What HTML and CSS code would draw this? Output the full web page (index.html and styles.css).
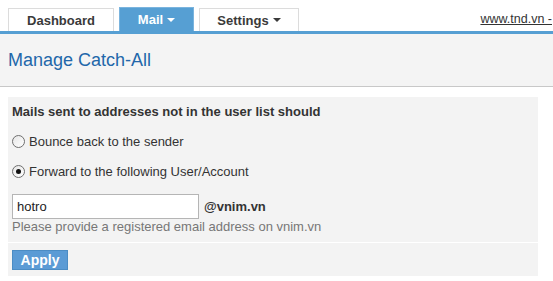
FILE: index.html
```html
<!DOCTYPE html>
<html lang="en">
<head>
    <meta charset="UTF-8">
    <title>Manage Catch-All</title>
    <link rel="stylesheet" href="styles.css">
</head>
<body>
    <header class="topbar">
        <nav class="tabs">
            <a class="tab tab-dashboard" href="#">Dashboard</a>
            <a class="tab tab-mail active" href="#">Mail <span class="caret"></span></a>
            <a class="tab tab-settings" href="#">Settings <span class="caret"></span></a>
        </nav>
        <a class="site-link" href="#">www.tnd.vn -</a>
    </header>

    <div class="page-head">
        <h1>Manage Catch-All</h1>
    </div>

    <main class="content">
        <form class="panel">
            <div class="panel-body">
                <p class="question">Mails sent to addresses not in the user list should</p>

                <label class="radio-row">
                    <input type="radio" name="catchall" value="bounce">
                    <span>Bounce back to the sender</span>
                </label>
                <label class="radio-row">
                    <input type="radio" name="catchall" value="forward" checked>
                    <span>Forward to the following User/Account</span>
                </label>

                <div class="address-row">
                    <input class="address-input" type="text" value="hotro">
                    <span class="domain">@vnim.vn</span>
                </div>
                <p class="hint">Please provide a registered email address on vnim.vn</p>
            </div>
            <div class="panel-foot">
                <button class="btn-apply" type="button">Apply</button>
            </div>
        </form>
    </main>
</body>
</html>
```

FILE: styles.css
```css
/* colours */
:root {
    --font-main: 'Liberation Sans', Arial, sans-serif;
    --color-blue: #569fd3;
    --color-title: #2267aa;
    --color-text: #333333;
    --color-muted: #777777;
    --color-panel: #f3f3f3;
}

body {
    margin: 0;
    font-family: var(--font-main);
    font-size: 13px;
    color: var(--color-text);
    background: #fff;
    overflow: hidden;
}

/* top tabs */
.topbar {
    display: flex;
    align-items: flex-end;
    height: 31px;
    border-bottom: 3px solid var(--color-blue);
    white-space: nowrap;
}

.tabs {
    display: flex;
    align-items: flex-end;
    gap: 5px;
    padding-left: 8px;
}

.tab {
    display: flex;
    align-items: center;
    justify-content: center;
    box-sizing: border-box;
    height: 23px;
    border: 1px solid #dcdcdc;
    border-bottom: none;
    background: #fff;
    color: #3a3a3a;
    font-weight: bold;
    font-size: 13px;
    text-decoration: none;
}

.tab-dashboard { width: 106px; }
.tab-mail { width: 75px; }
.tab-settings { width: 100px; }

.tab.active {
    height: 24px;
    background: var(--color-blue);
    border-color: #7ab4de;
    color: #fff;
}

.caret {
    display: inline-block;
    margin-left: 4px;
    border-left: 4px solid transparent;
    border-right: 4px solid transparent;
    border-top: 4px solid currentColor;
    vertical-align: middle;
}

.site-link {
    margin-left: auto;
    margin-right: 1px;
    align-self: center;
    padding-top: 6px;
    font-size: 12.5px;
    color: #333;
}

/* page title */
.page-head {
    height: 52px;
    background: #f4f4f4;
    border-bottom: 1px solid #c8c8c8;
    display: flex;
    align-items: center;
    padding-left: 8px;
}

h1 {
    margin: 0;
    padding-top: 1px;
    font-size: 18px;
    font-weight: normal;
    color: var(--color-title);
}

/* form panel */
.content {
    padding: 10px 0 0 8px;
}

.panel {
    width: 530px;
    background: var(--color-panel);
}

.panel-body {
    padding: 5px 4px 7px;
    border-bottom: 1px solid #fff;
}

.question {
    margin: 0;
    line-height: 20px;
    font-weight: bold;
}

.radio-row {
    display: flex;
    align-items: center;
    gap: 4px;
    height: 20px;
    margin-top: 9px;
}

.radio-row + .radio-row { margin-top: 10px; }

.radio-row input {
    appearance: none;
    box-sizing: border-box;
    width: 13px;
    height: 13px;
    margin: 0;
    border: 1px solid #6f6f6f;
    border-radius: 50%;
    background: linear-gradient(135deg, #e6e6e6, #fff);
    display: grid;
    place-items: center;
}

.radio-row input:checked::after {
    content: "";
    width: 5px;
    height: 5px;
    border-radius: 50%;
    background: #111;
}

.address-row {
    display: flex;
    align-items: center;
    gap: 5px;
    margin-top: 13px;
}

.address-input {
    box-sizing: border-box;
    width: 187px;
    height: 25px;
    margin: 0;
    padding: 0 4px;
    border: 1px solid #b5b5b5;
    font-family: var(--font-main);
    font-size: 13px;
    color: #222;
    outline: none;
}

.domain { font-weight: bold; }

.hint {
    margin: 0;
    line-height: 16px;
    color: var(--color-muted);
}

.panel-foot {
    padding: 7px 4px 6px;
}

.btn-apply {
    display: block;
    width: 56px;
    height: 20px;
    padding: 0;
    border: 1px solid #4b8cc4;
    background: #5b9bd5;
    color: #fff;
    font-family: var(--font-main);
    font-size: 14px;
    font-weight: bold;
}
```
